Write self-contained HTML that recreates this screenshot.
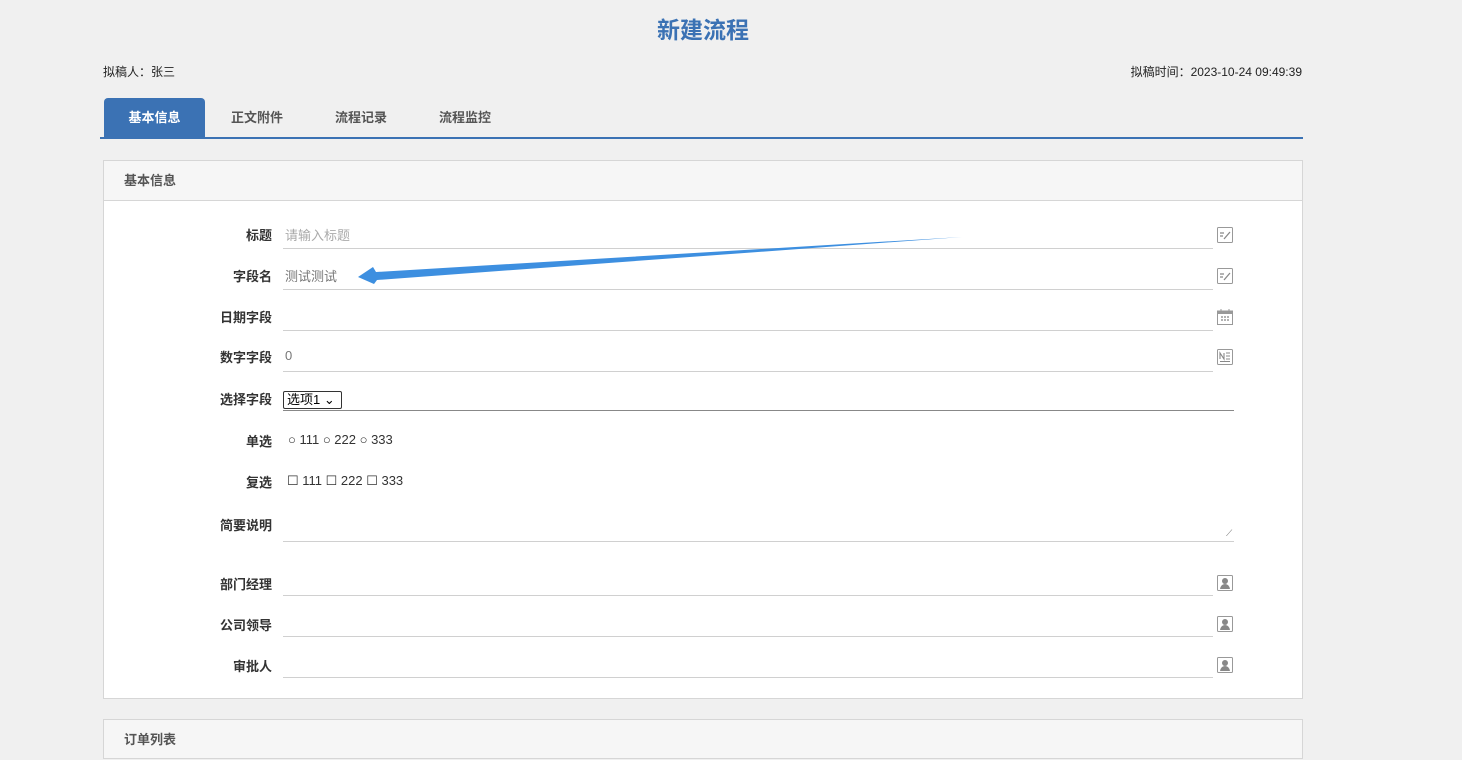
<!DOCTYPE html>
<html><head><meta charset="utf-8"><style>
*{margin:0;padding:0;box-sizing:border-box}
body{width:1462px;height:748px;background:#f0f0f0;font-family:"Liberation Sans","Noto Sans CJK SC",sans-serif;position:relative;overflow:hidden;font-size:13px;color:#333}
.a{position:absolute}
.lbl{position:absolute;width:120px;left:152px;text-align:right;font-weight:bold;font-size:13px;color:#333}
.ln{position:absolute;left:283px;height:1px;background:#d0d0d0}
.ic{position:absolute;left:1217px;width:16px;height:16px}
.v{position:absolute;left:285px;font-size:13px}
</style></head><body>
<div class="a" style="left:0;width:1406px;top:11px;text-align:center;font-size:23px;font-weight:bold;color:#3b72b4">新建流程</div>
<div class="a" style="left:103px;top:63px;font-size:12px;color:#222">拟稿人：张三</div>
<div class="a" style="right:160px;top:63px;font-size:12px;color:#222">拟稿时间：2023-10-24 09:49:39</div>
<div class="a" style="left:104px;top:98px;width:101px;height:40px;background:#3b72b4;border-radius:4px 4px 0 0;color:#fff;font-weight:bold;text-align:center;line-height:40px">基本信息</div>
<div class="a" style="left:231px;top:98px;line-height:40px;font-weight:bold;color:#555">正文附件</div>
<div class="a" style="left:335px;top:98px;line-height:40px;font-weight:bold;color:#555">流程记录</div>
<div class="a" style="left:439px;top:98px;line-height:40px;font-weight:bold;color:#555">流程监控</div>
<div class="a" style="left:100px;top:137px;width:1203px;height:2px;background:#3b72b4"></div>
<div class="a" style="left:103px;top:160px;width:1200px;height:539px;background:#fff;border:1px solid #d6d6d6"></div>
<div class="a" style="left:104px;top:161px;width:1198px;height:40px;background:#f6f6f6;border-bottom:1px solid #d6d6d6;line-height:40px;padding-left:20px;font-weight:bold;color:#555">基本信息</div>
<div class="a" style="left:103px;top:719px;width:1200px;height:40px;background:#f6f6f6;border:1px solid #d6d6d6;line-height:40px;padding-left:20px;font-weight:bold;color:#555">订单列表</div>

<div class="lbl" style="top:225px">标题</div><div class="v" style="top:225px;color:#aaa">请输入标题</div><div class="ln" style="top:248px;width:930px"></div>
<div class="lbl" style="top:266px">字段名</div><div class="v" style="top:266px;color:#777">测试测试</div><div class="ln" style="top:289px;width:930px"></div>
<div class="lbl" style="top:307px">日期字段</div><div class="ln" style="top:330px;width:930px"></div>
<div class="lbl" style="top:347px">数字字段</div><div class="v" style="top:348px;color:#777">0</div><div class="ln" style="top:371px;width:930px"></div>
<div class="lbl" style="top:389px">选择字段</div>
<div class="a" style="left:283px;top:391px;width:59px;height:18px;border:1px solid #333;border-radius:2px;font-size:13px;line-height:16px;padding-left:3px;color:#000">选项1 ⌄</div>
<div class="ln" style="top:410px;width:951px;background:#888"></div>
<div class="lbl" style="top:431px">单选</div>
<div class="a" style="left:288px;top:432px;font-size:13px">○ 111 ○ 222 ○ 333</div>
<div class="lbl" style="top:472px">复选</div>
<div class="a" style="left:287px;top:473px;font-size:13px">☐ 111 ☐ 222 ☐ 333</div>
<div class="lbl" style="top:515px">简要说明</div>
<div class="ln" style="top:541px;width:951px"></div>
<div class="a" style="left:1226px;top:528px;font-size:9px;color:#777">⟋</div>
<div class="lbl" style="top:574px">部门经理</div><div class="ln" style="top:595px;width:930px"></div>
<div class="lbl" style="top:615px">公司领导</div><div class="ln" style="top:636px;width:930px"></div>
<div class="lbl" style="top:656px">审批人</div><div class="ln" style="top:677px;width:930px"></div>

<svg class="ic" style="top:227px" viewBox="0 0 16 16"><rect x=".5" y=".5" width="15" height="15" rx="1" fill="none" stroke="#999"/><path d="M3 6h4M3 9h3M7 12l6-7" stroke="#888" stroke-width="1.3"/></svg>
<svg class="ic" style="top:268px" viewBox="0 0 16 16"><rect x=".5" y=".5" width="15" height="15" rx="1" fill="none" stroke="#999"/><path d="M3 6h4M3 9h3M7 12l6-7" stroke="#888" stroke-width="1.3"/></svg>
<svg class="ic" style="top:309px" viewBox="0 0 16 16"><rect x=".5" y="2" width="15" height="13.5" fill="none" stroke="#999"/><rect x=".5" y="2" width="15" height="3" fill="#999"/><path d="M4 0v3M12 0v3" stroke="#999"/><path d="M4 8h2M7 8h2M10 8h2M4 11h2M7 11h2M10 11h2" stroke="#999" stroke-width="1.5"/></svg>
<svg class="ic" style="top:349px" viewBox="0 0 16 16"><rect x=".5" y=".5" width="15" height="15" rx="1" fill="none" stroke="#999"/><path d="M3 10V4l4 6V4M9 4h4M9 7h4M9 10h4M3 12.5h10" stroke="#888" stroke-width="1.1" fill="none"/></svg>
<svg class="ic" style="top:575px" viewBox="0 0 16 16"><rect x=".5" y=".5" width="15" height="15" rx="1" fill="none" stroke="#999"/><circle cx="8" cy="6" r="3" fill="#888"/><path d="M3 14q1-5 5-5t5 5z" fill="#888"/></svg>
<svg class="ic" style="top:616px" viewBox="0 0 16 16"><rect x=".5" y=".5" width="15" height="15" rx="1" fill="none" stroke="#999"/><circle cx="8" cy="6" r="3" fill="#888"/><path d="M3 14q1-5 5-5t5 5z" fill="#888"/></svg>
<svg class="ic" style="top:657px" viewBox="0 0 16 16"><rect x=".5" y=".5" width="15" height="15" rx="1" fill="none" stroke="#999"/><circle cx="8" cy="6" r="3" fill="#888"/><path d="M3 14q1-5 5-5t5 5z" fill="#888"/></svg>

<svg class="a" style="left:0;top:0" width="1462" height="748"><polygon points="962,237 376,272 373,267 358,277 374,284 377,280" fill="#3d8fe0"/></svg>
</body></html>
